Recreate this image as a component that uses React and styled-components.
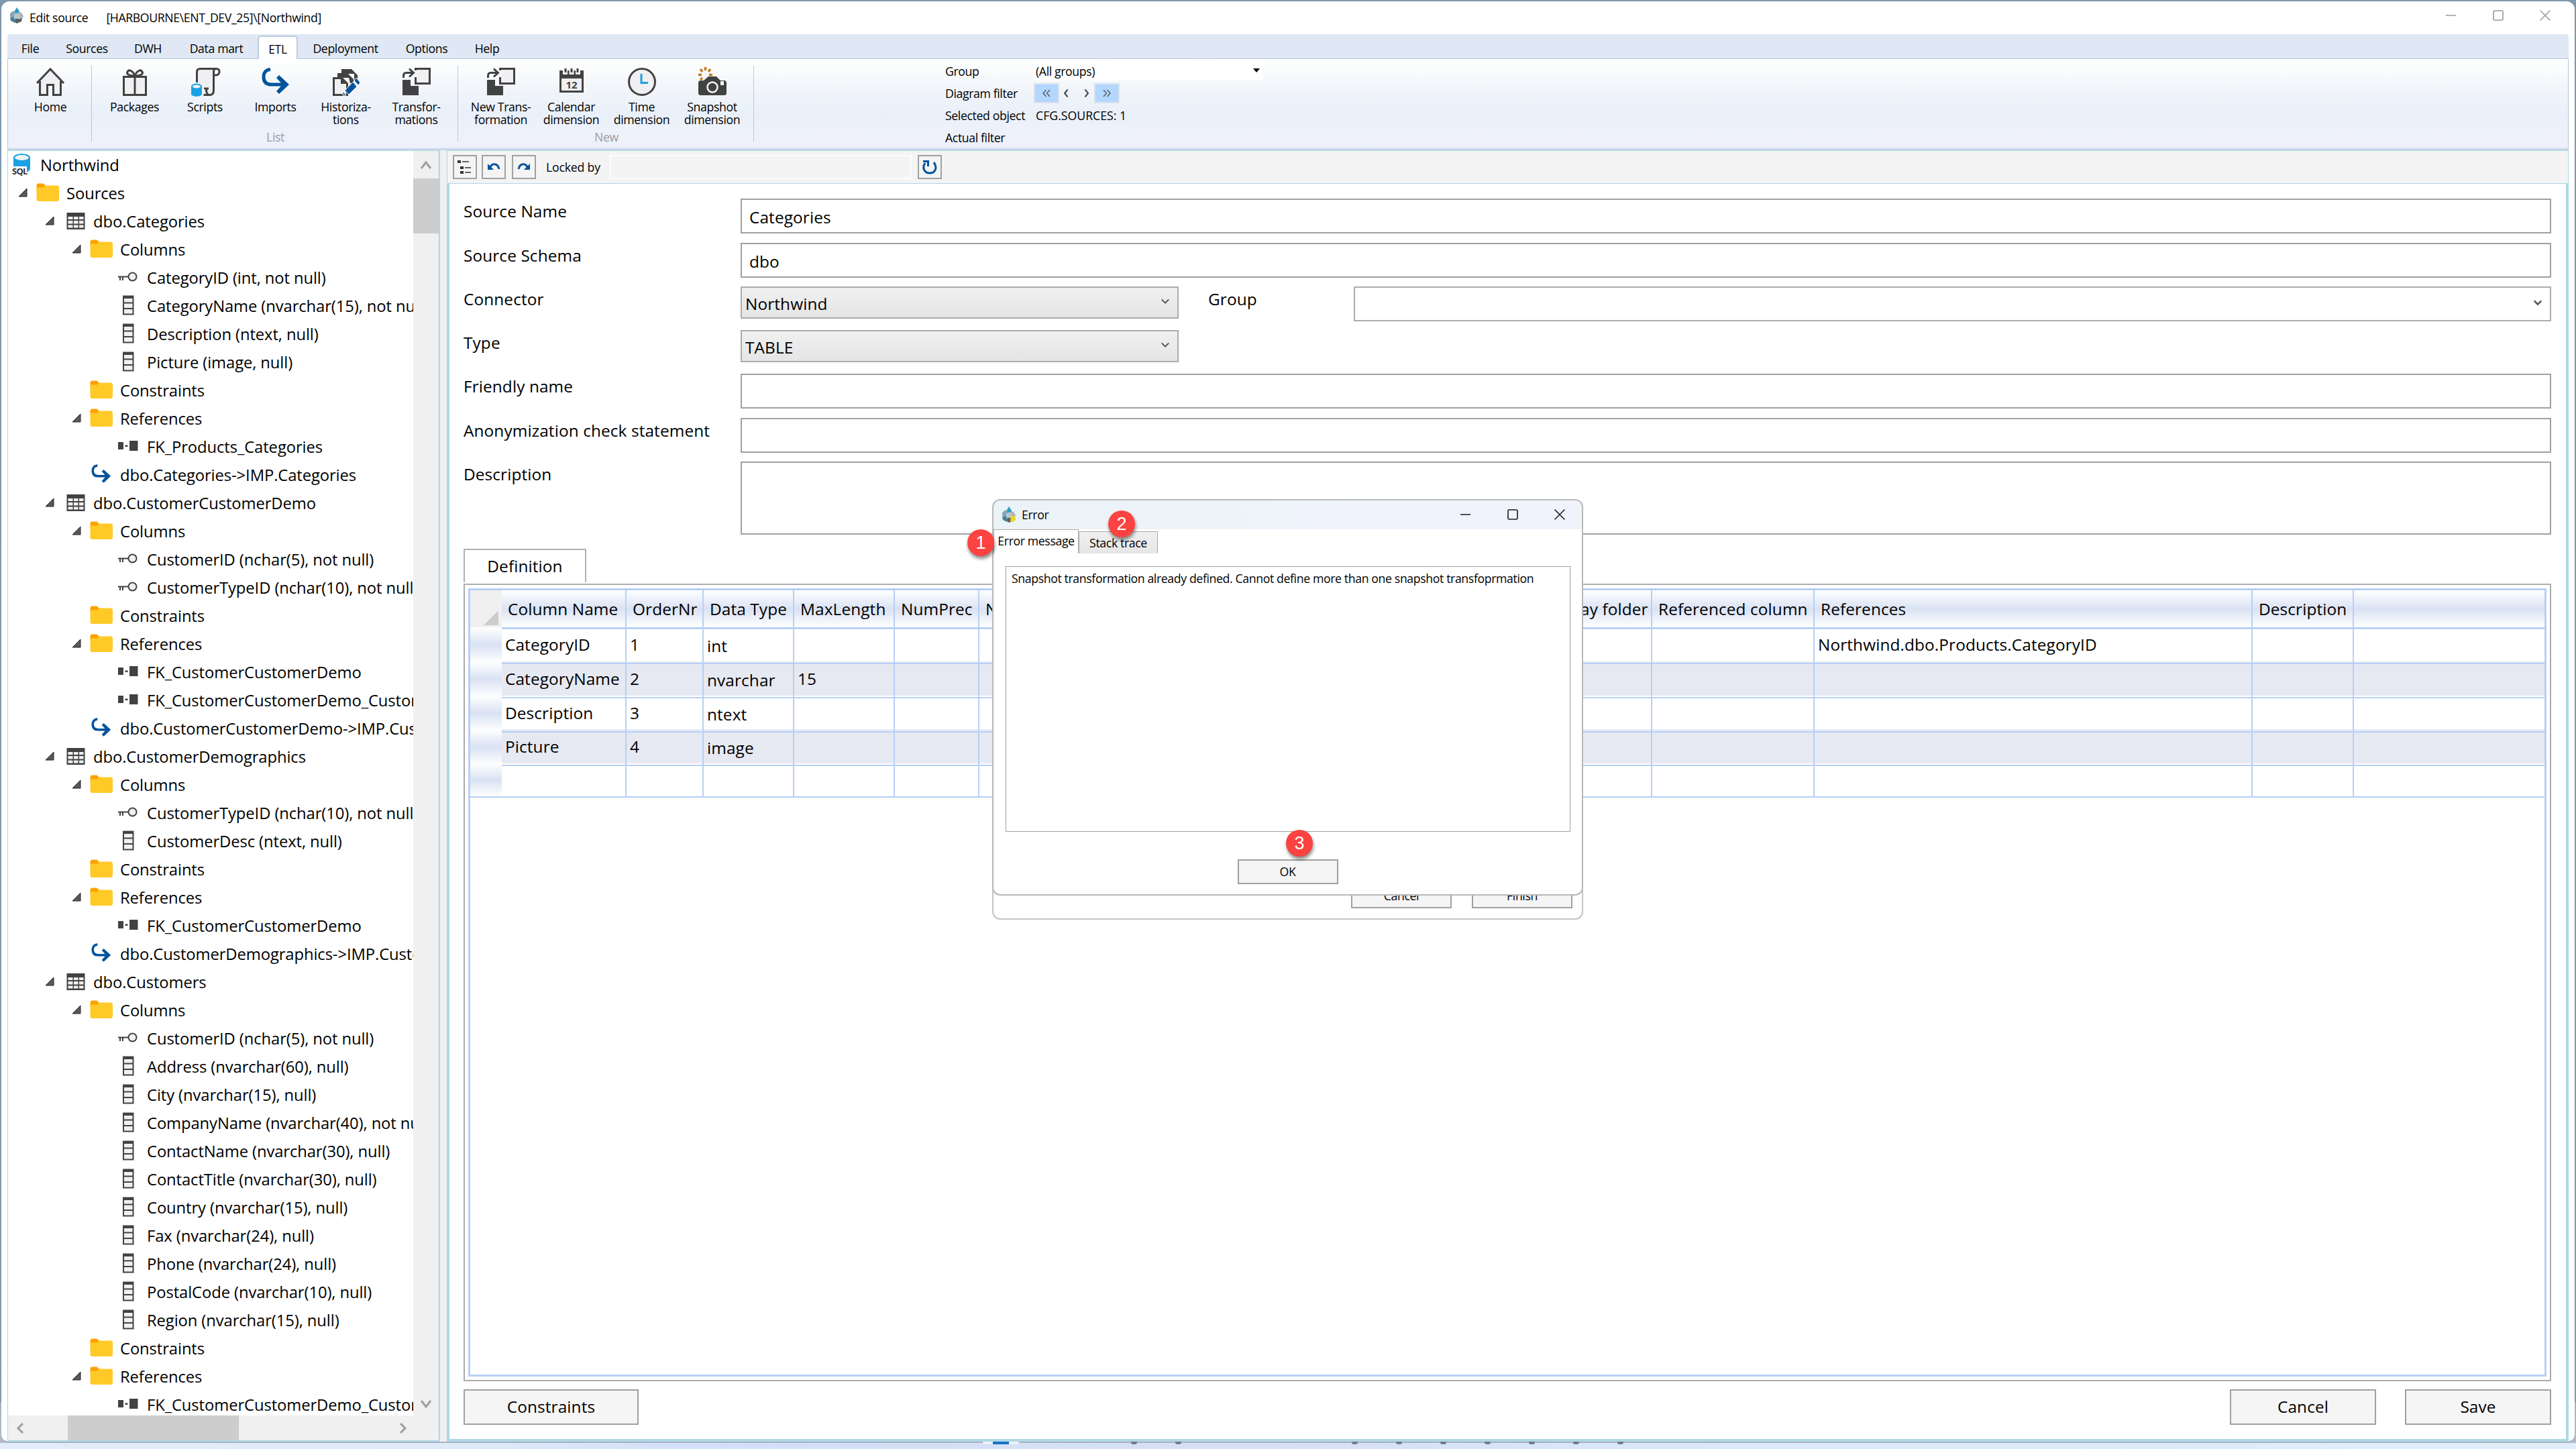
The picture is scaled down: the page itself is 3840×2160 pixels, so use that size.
import React from "react";
import styled, { createGlobalStyle } from "styled-components";

const menuItems = [
  { label: "File", width: 68 },
  { label: "Sources", width: 101 },
  { label: "DWH", width: 81 },
  { label: "Data mart", width: 123 },
  { label: "ETL", width: 60, active: true },
  { label: "Deployment", width: 142 },
  { label: "Options", width: 100 },
  { label: "Help", width: 80 },
];

const tree = [
  [0, "sql", "Northwind"],
  [1, "folder", "Sources", true],
  [2, "table", "dbo.Categories", true],
  [3, "folder", "Columns", true],
  [4, "key", "CategoryID (int, not null)"],
  [4, "column", "CategoryName (nvarchar(15), not null)"],
  [4, "column", "Description (ntext, null)"],
  [4, "column", "Picture (image, null)"],
  [3, "folder", "Constraints"],
  [3, "folder", "References", true],
  [4, "fk", "FK_Products_Categories"],
  [3, "import", "dbo.Categories->IMP.Categories"],
  [2, "table", "dbo.CustomerCustomerDemo", true],
  [3, "folder", "Columns", true],
  [4, "key", "CustomerID (nchar(5), not null)"],
  [4, "key", "CustomerTypeID (nchar(10), not null)"],
  [3, "folder", "Constraints"],
  [3, "folder", "References", true],
  [4, "fk", "FK_CustomerCustomerDemo"],
  [4, "fk", "FK_CustomerCustomerDemo_Customers"],
  [3, "import", "dbo.CustomerCustomerDemo->IMP.CustomerCustomerDemo"],
  [2, "table", "dbo.CustomerDemographics", true],
  [3, "folder", "Columns", true],
  [4, "key", "CustomerTypeID (nchar(10), not null)"],
  [4, "column", "CustomerDesc (ntext, null)"],
  [3, "folder", "Constraints"],
  [3, "folder", "References", true],
  [4, "fk", "FK_CustomerCustomerDemo"],
  [3, "import", "dbo.CustomerDemographics->IMP.CustomerDemographics"],
  [2, "table", "dbo.Customers", true],
  [3, "folder", "Columns", true],
  [4, "key", "CustomerID (nchar(5), not null)"],
  [4, "column", "Address (nvarchar(60), null)"],
  [4, "column", "City (nvarchar(15), null)"],
  [4, "column", "CompanyName (nvarchar(40), not null)"],
  [4, "column", "ContactName (nvarchar(30), null)"],
  [4, "column", "ContactTitle (nvarchar(30), null)"],
  [4, "column", "Country (nvarchar(15), null)"],
  [4, "column", "Fax (nvarchar(24), null)"],
  [4, "column", "Phone (nvarchar(24), null)"],
  [4, "column", "PostalCode (nvarchar(10), null)"],
  [4, "column", "Region (nvarchar(15), null)"],
  [3, "folder", "Constraints"],
  [3, "folder", "References", true],
  [4, "fk", "FK_CustomerCustomerDemo_Customers"],
];

const headers = [
  "Column Name",
  "OrderNr",
  "Data Type",
  "MaxLength",
  "NumPrec",
  "NumScale",
  "",
  "Display folder",
  "Referenced column",
  "References",
  "Description",
  "",
];

const rows = [
  ["CategoryID", "1", "int", "", "", "", "", "", "", "Northwind.dbo.Products.CategoryID", "", ""],
  ["CategoryName", "2", "nvarchar", "15", "", "", "", "", "", "", "", ""],
  ["Description", "3", "ntext", "", "", "", "", "", "", "", "", ""],
  ["Picture", "4", "image", "", "", "", "", "", "", "", "", ""],
  ["", "", "", "", "", "", "", "", "", "", "", ""],
];

/* ---------- icons ---------- */

const Logo = ({ warning }) => (
  <svg width="22" height="24" viewBox="0 0 22 24">
    <path d="M11 0l4 6v5l-4 2-3-2V5z" fill="#2f9cc0" />
    <path d="M1 9l5-4 3 2v5l-4 3-4-1z" fill="#7fa9b8" />
    <path d="M14 7l4 1 3 5-2 4-6-2z" fill="#a9b3b8" />
    <path d="M7 10l6-2 4 5-4 5-6-2z" fill="#b9c3c8" />
    <path d="M1 15l5-1 3 4-1 5-6-3z" fill="#4b8295" />
    <path d="M9 17l5 0 5-1-1 5-7 3-3-2z" fill="#596064" />
    {warning && <path d="M14 14h6l1 6-4 3-4-1z" fill="#ecd526" />}
  </svg>
);

const HomeIcon = () => (
  <svg width="48" height="48" viewBox="0 0 48 48">
    <path d="M8 24L24 6l16 18v20H29V27H19v17H8z" fill="#f0eff1" />
    <path
      d="M4 26L24 5l20 21M8.500 23v20.500H19.500V28.500h9V43.500h11V23"
      fill="none"
      stroke="#424242"
      strokeWidth="3"
    />
  </svg>
);

const PackageIcon = () => (
  <svg width="48" height="48" viewBox="0 0 48 48">
    <path
      d="M7.500 16.500h33v27h-33zM24 16v27M24 15c-3-8-9-10-11-6s3 6 11 6zM24 15c3-8 9-10 11-6s-3 6-11 6z"
      fill="#f0eff1"
      stroke="#424242"
      strokeWidth="3"
    />
  </svg>
);

const ScriptIcon = () => (
  <svg width="48" height="48" viewBox="0 0 48 48">
    <path d="M13 5h23v38H24l-3-10h-9z" fill="#f0eff1" />
    <path
      d="M11.500 25V9c0-3 2-4.500 5-4.500h24c3 0 4.500 2 4.500 4.500s-2 5-4.500 5h-4V8c0-2 1-3.500 4-3.500M36.500 13v24c0 4-2 6.500-6 6.500h-9M22 34h7M27 34c-3 3-1 6 1 9"
      fill="none"
      stroke="#424242"
      strokeWidth="3"
    />
    <path d="M3 31h16v11c0 5-16 5-16 0z" fill="#1ba1e2" />
    <ellipse cx="11" cy="31" rx="7" ry="3.500" fill="#eef3f7" stroke="#1ba1e2" strokeWidth="2" />
  </svg>
);

const ImportIcon = ({ size = 48 }) => (
  <svg width={size} height={size} viewBox="0 0 48 48">
    <path
      d="M16 5.500C9 6 5.500 11 6 18c.5 7 5 10 12 10h22"
      fill="none"
      stroke="#00539c"
      strokeWidth="5"
    />
    <path d="M29 14l15 14-15 14-4-4 9-10-9-10z" fill="#00539c" />
  </svg>
);

const HistoryIcon = () => (
  <svg width="48" height="48" viewBox="0 0 48 48">
    <path d="M17 5h15l9 9v7h-5V12H17z" fill="#424242" />
    <path d="M11 11h15l9 9v6h-5l-2-8H11z" fill="#424242" />
    <path d="M5.500 18.500h12l8 8v17h-20z" fill="#f0eff1" stroke="#424242" strokeWidth="3" />
    <path d="M16 17v10h10z" fill="#424242" />
    <path d="M39 18l6 7-3 4-6-7zM34 24l6 7-12 12-6-6zM19 38l5 6h-5z" fill="#00539c" stroke="#f6f6f6" />
  </svg>
);

const TransformIcon = () => (
  <svg width="48" height="48" viewBox="0 0 48 48">
    <path d="M3 21h12v9h12v14H3z" fill="#424242" />
    <path d="M22.500 4.500h21v22h-21z" fill="#f0eff1" stroke="#424242" strokeWidth="3" />
    <path d="M21 7v10h4V7z" fill="#f6f6f6" />
    <path d="M4.500 18v-3c0-3 1.500-4.500 4-4.500h9M13 4.500l6.500 6-6.500 6" fill="none" stroke="#424242" strokeWidth="3" />
  </svg>
);

const CalendarIcon = () => (
  <svg width="48" height="48" viewBox="0 0 48 48">
    <path d="M6 7h36v33H6z" fill="#424242" />
    <path d="M9 19h30v18H9z" fill="#f0eff1" />
    <path d="M11 4h7v9h-7zM20.500 4h7v9h-7zM30 4h7v9h-7z" fill="#f6f6f6" />
    <path d="M15 4v6M24 4v6M33 4v6" stroke="#424242" strokeWidth="3" />
    <CalendarText x="24" y="34">
      12
    </CalendarText>
  </svg>
);

const ClockIcon = () => (
  <svg width="48" height="48" viewBox="0 0 48 48">
    <circle cx="24" cy="24" r="19.500" fill="#f0eff1" stroke="#424242" strokeWidth="3" />
    <path d="M23 12v13.500h10" fill="none" stroke="#1ba1e2" strokeWidth="3" />
  </svg>
);

const CameraIcon = () => (
  <svg width="48" height="48" viewBox="0 0 48 48">
    <path d="M3 26c0-3 1-4 4-4h4l7-6h12l6 6h5c3 0 4 1 4 4v15c0 2-1 3-4 3H7c-3 0-4-1-4-3z" fill="#424242" />
    <circle cx="24" cy="32" r="7.500" fill="#424242" stroke="#f6f6f6" strokeWidth="2.500" />
    <path d="M36 23h5v6h-5z" fill="#f6f6f6" />
    <path d="M13.500 2v5M6 5l3 4M21 5l-3 4M3 13.500h5M19 13.500h5M6 21l3-3" stroke="#c27d1a" strokeWidth="3.500" />
  </svg>
);

const TreeIcon = ({ name }) => {
  switch (name) {
    case "sql":
      return (
        <svg width="36" height="36" viewBox="0 0 36 36">
          <path d="M6 7v17c0 9 25 9 25 0V7z" fill="#1ba1e2" />
          <ellipse cx="18.500" cy="8" rx="11.500" ry="5" fill="#f0f3f5" stroke="#1ba1e2" strokeWidth="2" />
          <path d="M3 21h23v14H3z" fill="#fff" />
          <SqlText x="4" y="33">
            SQL
          </SqlText>
        </svg>
      );
    case "folder":
      return (
        <svg width="36" height="36" viewBox="0 0 36 36">
          <path d="M1.500 8c0-2 1-3.500 3-3.500h7l3.500 3.500 3 6H1.500z" fill="#ffa000" />
          <path d="M1.500 10.500L12 10.500l3-3h17c2 0 3 1 3 3V28c0 2-1 3-3 3H4.500c-2 0-3-1-3-3z" fill="#ffca28" />
        </svg>
      );
    case "table":
      return (
        <svg width="36" height="36" viewBox="0 0 36 36">
          <path d="M6.500 6h27v25h-27z" fill="#424242" />
          <path
            d="M8.500 12h7v4h-7zM17 12h6.500v4H17zM25 12h6.500v4H25zM8.500 18h7v4.500h-7zM17 18h6.500v4.500H17zM25 18h6.500v4.500H25zM8.500 24.500h7v4h-7zM17 24.500h6.500v4H17zM25 24.500h6.500v4H25z"
            fill="#f0eff1"
          />
        </svg>
      );
    case "key":
      return (
        <svg width="36" height="36" viewBox="0 0 36 36">
          <circle cx="24.500" cy="17.500" r="6" fill="#f0eff1" stroke="#424242" strokeWidth="2" />
          <path d="M3 17.500h15M6 18v5M10 18v5" stroke="#424242" strokeWidth="2" />
        </svg>
      );
    case "column":
      return (
        <svg width="36" height="36" viewBox="0 0 36 36">
          <path d="M10 3.500h16.500V32.500H10z" fill="#424242" />
          <path d="M12 8h12.500v5.500H12zM12 15.500h12.500V22H12zM12 24h12.500v6.500H12z" fill="#f0eff1" />
        </svg>
      );
    case "fk":
      return (
        <svg width="36" height="36" viewBox="0 0 36 36">
          <path d="M3 12h8v11H3zM20 10h12.500v15H20zM13.500 16.500h4v2.500h-4z" fill="#424242" />
        </svg>
      );
    default:
      return <ImportIcon size={34} />;
  }
};

const Chevron = ({ d, size = 16, color = "#9f9f9f", width = 3 }) => (
  <svg width={size} height={size} viewBox="0 0 16 16">
    <path d={d} fill="none" stroke={color} strokeWidth={width} />
  </svg>
);

const WindowButtons = ({ color, gap }) => (
  <Controls $gap={gap}>
    <svg width="16" height="16" viewBox="0 0 16 16">
      <path d="M0 8h15" stroke={color} strokeWidth="1.500" />
    </svg>
    <svg width="16" height="16" viewBox="0 0 16 16">
      <rect x="1" y="1" width="14" height="14" rx="1.500" fill="none" stroke={color} strokeWidth="1.600" />
    </svg>
    <svg width="16" height="16" viewBox="0 0 16 16">
      <path d="M.5.5l15 15M15.500.5l-15 15" stroke={color} strokeWidth="1.500" />
    </svg>
  </Controls>
);

/* ---------- page ---------- */

const RibbonItem = ({ icon, children }) => (
  <RibbonButton>
    {icon}
    <span>{children}</span>
  </RibbonButton>
);

const Ribbon = () => (
  <RibbonBar>
    <RibbonGroup $width={125}>
      <RibbonItems>
        <RibbonItem icon={<HomeIcon />}>Home</RibbonItem>
      </RibbonItems>
    </RibbonGroup>
    <RibbonGroup $width={546}>
      <RibbonItems>
        <RibbonItem icon={<PackageIcon />}>Packages</RibbonItem>
        <RibbonItem icon={<ScriptIcon />}>Scripts</RibbonItem>
        <RibbonItem icon={<ImportIcon />}>Imports</RibbonItem>
        <RibbonItem icon={<HistoryIcon />}>
          Historiza-
          <br />
          tions
        </RibbonItem>
        <RibbonItem icon={<TransformIcon />}>
          Transfor-
          <br />
          mations
        </RibbonItem>
      </RibbonItems>
      <GroupCaption>List</GroupCaption>
    </RibbonGroup>
    <RibbonGroup $width={441}>
      <RibbonItems>
        <RibbonItem icon={<TransformIcon />}>
          New Trans-
          <br />
          formation
        </RibbonItem>
        <RibbonItem icon={<CalendarIcon />}>
          Calendar
          <br />
          dimension
        </RibbonItem>
        <RibbonItem icon={<ClockIcon />}>
          Time
          <br />
          dimension
        </RibbonItem>
        <RibbonItem icon={<CameraIcon />}>
          Snapshot
          <br />
          dimension
        </RibbonItem>
      </RibbonItems>
      <GroupCaption>New</GroupCaption>
    </RibbonGroup>
    <Filters>
      <span>Group</span>
      <GroupSelect>
        (All groups)
        <svg width="10" height="7" viewBox="0 0 10 7">
          <path d="M0 0h10L5 6z" fill="#000" />
        </svg>
      </GroupSelect>
      <span>Diagram filter</span>
      <Pager>
        <PagerButton $on>
          <Chevron d="M7.500 3L3 8l4.500 5M13 3L8.500 8l4.500 5" color="#555" width={1.3} />
        </PagerButton>
        <Chevron d="M10.500 2.500L6 8l4.500 5.500" color="#444" width={2} />
        <Chevron d="M5.500 2.500L10 8l-4.500 5.500" color="#444" width={2} />
        <PagerButton $on>
          <Chevron d="M3 3l4.500 5L3 13M8.500 3L13 8l-4.500 5" color="#555" width={1.3} />
        </PagerButton>
      </Pager>
      <span>Selected object</span>
      <FilterValue>CFG.SOURCES: 1</FilterValue>
      <span>Actual filter</span>
      <FilterValue />
    </Filters>
  </RibbonBar>
);

const SourceTree = () => (
  <TreePanel>
    <TreeList>
      {tree.map(([level, icon, text, open], i) => (
        <TreeRow key={i} $level={level}>
          <Expander>
            {open && (
              <svg width="14" height="14" viewBox="0 0 14 14">
                <path d="M13 1v12H1z" fill="#595959" stroke="#262626" />
              </svg>
            )}
          </Expander>
          <IconBox>
            <TreeIcon name={icon} />
          </IconBox>
          {text}
        </TreeRow>
      ))}
    </TreeList>
    <VerticalScroll>
      <Chevron d="M1 14l7-9 7 9" />
      <VerticalThumb />
      <Chevron d="M1 2l7 9 7-9" />
    </VerticalScroll>
    <HorizontalScroll>
      <Chevron d="M11 1L4 8l7 7" />
      <HorizontalThumb />
      <Chevron d="M5 1l7 7-7 7" />
    </HorizontalScroll>
    <ScrollCorner />
  </TreePanel>
);

const Toolbar = () => (
  <ToolbarBar>
    <ToolButton>
      <svg width="22" height="24" viewBox="0 0 22 24">
        <path d="M0 2h5v4H0zM4 11h5v4H4zM4 18h5v4H4z" fill="#333" />
        <path d="M7 4h10M11 13h9M11 20h9" stroke="#333" strokeWidth="1.500" />
      </svg>
    </ToolButton>
    <ToolButton $gap={7}>
      <svg width="20" height="20" viewBox="0 0 20 20">
        <path d="M4 12C7 3 16 4 18 13" fill="none" stroke="#00539c" strokeWidth="3" />
        <path d="M1 5l9 9H1z" fill="#00539c" />
      </svg>
    </ToolButton>
    <ToolButton $gap={9}>
      <svg width="20" height="20" viewBox="0 0 20 20">
        <path d="M16 12C13 3 4 4 2 13" fill="none" stroke="#00539c" strokeWidth="3" />
        <path d="M19 5l-9 9h9z" fill="#00539c" />
      </svg>
    </ToolButton>
    <LockedLabel>Locked by</LockedLabel>
    <LockedField />
    <ToolButton $gap={9}>
      <svg width="24" height="24" viewBox="0 0 24 24">
        <path d="M5 6C0 13 4 21 12 21s12-8 6-16" fill="none" stroke="#00539c" strokeWidth="3" />
        <path d="M2 2h9v9H8V5H2z" fill="#00539c" />
      </svg>
    </ToolButton>
  </ToolbarBar>
);

const Combo = ({ value, white }) => (
  <ComboBox $white={white}>
    {value}
    <Chevron d="M2 5l6 6 6-6" size={14} color="#555" width={white ? 3 : 2.4} />
  </ComboBox>
);

const SourceForm = () => (
  <Form>
    <Label>Source Name</Label>
    <Input>Categories</Input>
    <Label>Source Schema</Label>
    <Input>dbo</Input>
    <Label>Connector</Label>
    <SplitField>
      <Combo value="Northwind" />
      <Label>Group</Label>
      <Combo white />
    </SplitField>
    <Label>Type</Label>
    <SplitField>
      <Combo value="TABLE" />
    </SplitField>
    <Label>Friendly name</Label>
    <Input />
    <Label>Anonymization check statement</Label>
    <Input />
    <Label>Description</Label>
    <Input $tall />
  </Form>
);

const DefinitionGrid = () => (
  <GridBox>
    <GridHeader>
      <GridCorner>
        <svg width="22" height="22" viewBox="0 0 22 22">
          <path d="M22 0v22H0z" fill="#cdcdcd" />
        </svg>
      </GridCorner>
      {headers.map((text, i) => (
        <HeaderCell key={i}>{text}</HeaderCell>
      ))}
    </GridHeader>
    {rows.map((cells, i) => (
      <GridRow key={i} $alt={i % 2 === 1}>
        <RowHandle />
        {cells.map((text, j) => (
          <Cell key={j} $low={j === 2}>
            {text}
          </Cell>
        ))}
      </GridRow>
    ))}
  </GridBox>
);

const ErrorDialog = () => (
  <Dialog>
    <DialogTitle>
      <Logo warning />
      Error
      <WindowButtons color="#1a1a1a" gap={54} />
    </DialogTitle>
    <DialogTabs>
      <DialogTab $active>Error message</DialogTab>
      <DialogTab>Stack trace</DialogTab>
    </DialogTabs>
    <MessageBox>
      Snapshot transformation already defined. Cannot define more than one snapshot transfoprmation
    </MessageBox>
    <SmallButton>OK</SmallButton>
  </Dialog>
);

const App = () => {
  return (
    <Desktop>
      <GlobalStyle />
      <Window>
        <TitleBar>
          <Logo />
          <TitleText>Edit source</TitleText>
          <TitleText>[HARBOURNE\ENT_DEV_25]\[Northwind]</TitleText>
          <WindowButtons color="#999" gap={54} />
        </TitleBar>
        <MenuBar>
          {menuItems.map((item) => (
            <MenuItem key={item.label} $width={item.width} $active={item.active}>
              {item.label}
            </MenuItem>
          ))}
        </MenuBar>
        <Ribbon />
        <Main>
          <SourceTree />
          <Editor>
            <Toolbar />
            <EditorBody>
              <SourceForm />
              <TabHeader>Definition</TabHeader>
              <TabPanel>
                <DefinitionGrid />
              </TabPanel>
              <Footer>
                <Button $width={261}>Constraints</Button>
                <FooterRight>
                  <Button $width={218}>Cancel</Button>
                  <Button $width={218}>Save</Button>
                </FooterRight>
              </Footer>
            </EditorBody>
          </Editor>
        </Main>
      </Window>
      <Taskbar>
        <TaskActive />
        {[167, 57, 254, 57, 57, 57, 57, 57, 57].map((gap, i) => (
          <TaskDot key={i} $gap={gap} />
        ))}
      </Taskbar>
      <Wizard>
        <SmallButton>Cancel</SmallButton>
        <SmallButton>Finish</SmallButton>
      </Wizard>
      <ErrorDialog />
      <Badge $x={1442} $y={789}>1</Badge>
      <Badge $x={1652} $y={761}>2</Badge>
      <Badge $x={1917} $y={1237}>3</Badge>
    </Desktop>
  );
};

export default App;

const GlobalStyle = createGlobalStyle`
  * {
    box-sizing: border-box;
  }

  body {
    margin: 0;
    font-family: "Open Sans", "Noto Sans", sans-serif;
    font-size: 17.7px;
    letter-spacing: -0.38px;
    color: #000;
  }

  svg {
    display: block;
    flex-shrink: 0;
  }
`;

const CalendarText = styled.text`
  font-size: 15px;
  font-weight: 700;
  text-anchor: middle;
  letter-spacing: 0;
  fill: #424242;
`;

const SqlText = styled.text`
  font-size: 13px;
  font-weight: 700;
  letter-spacing: -0.06em;
  fill: #333;
`;

const Desktop = styled.div`
  position: relative;
  width: 3840px;
  height: 2160px;
  padding: 2px 2px 0;
  overflow: hidden;
  background: linear-gradient(#7f97ab 0, #8499ad 2090px, #a9b2c0 2091px, #b3bcc8 2151px);
`;

const Window = styled.div`
  display: flex;
  flex-direction: column;
  height: 2149px;
  padding: 0 9px;
  background: #fff;
  border-bottom: 2px solid #aab4c0;
  border-radius: 12px;
`;

const TitleBar = styled.header`
  display: flex;
  align-items: center;
  height: 49px;
  padding: 0 27px 7px 3px;
`;

const TitleText = styled.span`
  margin: 5px 19px 0 8px;
  white-space: pre;
`;

const Controls = styled.div`
  display: flex;
  gap: ${(props) => props.$gap}px;
  margin-left: auto;
`;

const MenuBar = styled.nav`
  display: flex;
  align-items: flex-end;
  height: 36px;
  background: #dfe8f4;
`;

const MenuItem = styled.div`
  display: flex;
  align-items: center;
  justify-content: center;
  width: ${(props) => props.$width}px;
  height: 34px;
  padding-top: 4px;
  border: ${(props) => (props.$active ? "2px solid #bccbe0" : "none")};
  border-bottom: none;
  border-radius: 5px 5px 0 0;
  background: ${(props) => (props.$active ? "#fff" : "none")};
  ${(props) => props.$active && "height: 35px; margin-bottom: -1px; padding-top: 2px; z-index: 1;"}
`;

const RibbonBar = styled.section`
  display: flex;
  height: 137px;
  border: 1px solid #b9c8de;
  border-bottom: 3px solid #c8d7e8;
  background: linear-gradient(#fefffe 0, #f1f5fa 35%, #e9f0f9 60%, #edf1fa 75%, #eef1fa 100%);
`;

const RibbonGroup = styled.div`
  display: flex;
  flex-direction: column;
  width: ${(props) => props.$width}px;
  height: 113px;
  margin-top: 10px;
  padding: 0 9px 0 11px;
  border-right: 1px solid #b9c9de;
`;

const RibbonItems = styled.div`
  display: flex;
  height: 96px;
`;

const RibbonButton = styled.div`
  display: flex;
  flex-direction: column;
  align-items: center;
  width: 105px;
  text-align: center;
  line-height: 19px;
  white-space: nowrap;

  span {
    margin-top: 4px;
  }
`;

const GroupCaption = styled.div`
  margin-top: 2px;
  text-align: center;
  line-height: 28px;
  color: #9a9da3;
`;

const Filters = styled.div`
  display: grid;
  grid-template-columns: 132px 341px;
  grid-template-rows: repeat(4, 33px);
  align-items: center;
  margin-left: 285px;
  margin-top: 1px;
`;

const GroupSelect = styled.div`
  display: flex;
  align-items: center;
  justify-content: space-between;
  height: 29px;
  padding: 0 4px 0 3px;
  background: #fff;
`;

const Pager = styled.div`
  display: flex;
  align-items: center;
  gap: 15px;
  svg:nth-of-type(1) {
    margin-left: -13px;
  }
  svg:nth-of-type(2) {
    margin-right: -12px;
  }
`;

const PagerButton = styled.div`
  display: flex;
  justify-content: center;
  align-items: center;
  width: 38px;
  height: 30px;
  border: 2px solid #dbe2ec;
  background: #b3d7fe;
  && svg {
    margin: 0;
  }
`;

const FilterValue = styled.div`
  padding-left: 3px;
  letter-spacing: 0;
`;

const Main = styled.main`
  display: flex;
  gap: 10px;
  flex: 1;
  min-height: 0;
  background: #f0f0f0;
`;

const TreePanel = styled.aside`
  display: grid;
  grid-template-columns: 1fr 38px;
  grid-template-rows: 1fr 37px;
  width: 645px;
  min-height: 0;
  border: 1px solid #add8e6;
  border-right-width: 2px;
  border-bottom-width: 2px;
  background: #fff;
`;

const TreeList = styled.div`
  min-width: 0;
  min-height: 0;
  overflow: hidden;
`;

const TreeRow = styled.div`
  display: flex;
  align-items: center;
  height: 42px;
  padding-left: ${(props) => props.$level * 40 - 33}px;
  margin-left: ${(props) => (props.$level === 0 ? -32 : 0)}px;
  font-size: 23.800px;
  letter-spacing: -0.1px;
  white-space: nowrap;
`;

const Expander = styled.div`
  display: flex;
  justify-content: center;
  flex-shrink: 0;
  width: 34px;
  margin-top: -3px;
  padding-right: 5px;
`;

const IconBox = styled.div`
  display: flex;
  justify-content: center;
  flex-shrink: 0;
  width: 36px;
  margin: -3px 10px 0 0;
`;

const VerticalScroll = styled.div`
  display: flex;
  flex-direction: column;
  align-items: center;
  padding: 12px 0 8px;
  background: #f0f0f0;

  svg:last-child {
    margin-top: auto;
  }
`;

const VerticalThumb = styled.div`
  width: 100%;
  height: 82px;
  margin-top: 13px;
  background: #cdcdcd;
`;

const HorizontalScroll = styled.div`
  display: flex;
  align-items: center;
  padding: 0 8px 0 11px;
  background: #f0f0f0;

  svg:last-child {
    margin-left: auto;
  }
`;

const HorizontalThumb = styled.div`
  width: 255px;
  height: 100%;
  margin-left: 62px;
  background: #cdcdcd;
`;

const ScrollCorner = styled.div`
  background: #f0f0f0;
`;

const Editor = styled.section`
  display: flex;
  flex-direction: column;
  flex: 1;
  min-width: 0;
`;

const ToolbarBar = styled.div`
  display: flex;
  align-items: center;
  height: 50px;
  padding-left: 8px;
  border: 1px solid #add8e6;
  background: #f4f4f4;
`;

const ToolButton = styled.div`
  display: flex;
  align-items: center;
  justify-content: center;
  width: 36px;
  height: 36px;
  margin-left: ${(props) => props.$gap || 0}px;
  border: 2px solid #a0a0a0;
`;

const LockedLabel = styled.span`
  width: 110px;
  padding-left: 15px;
  letter-spacing: -0.2px;
`;

const LockedField = styled.div`
  width: 450px;
  height: 36px;
  border: 2px solid #fdfdfd;
`;

const EditorBody = styled.div`
  display: flex;
  flex-direction: column;
  flex: 1;
  min-height: 0;
  padding: 22px 22px 21px 21px;
  border: 4px solid #add8e6;
  border-top: none;
  background: #fff;
  font-size: 24.400px;
  letter-spacing: 0.1px;
`;

const Form = styled.div`
  display: grid;
  grid-template-columns: 413px 1fr;
  grid-template-rows: 66px 65px 65px 65px 66px 65px 109px;
`;

const Label = styled.label`
  line-height: 38px;
`;

const Input = styled.div`
  height: ${(props) => (props.$tall ? 109 : 52)}px;
  padding: 4px 11px 0;
  border: 2px solid #a0a0a0;
  line-height: 44px;
`;

const SplitField = styled.div`
  display: grid;
  grid-template-columns: 653px 261px 1fr;

  ${Label} {
    padding-left: 44px;
  }
`;

const ComboBox = styled.div`
  display: flex;
  align-items: center;
  justify-content: space-between;
  height: ${(props) => (props.$white ? 52 : 48)}px;
  padding: 2px 11px 0 5px;
  border: 2px solid #acacac;
  background: ${(props) => (props.$white ? "#fff" : "linear-gradient(#f0f0f0, #e5e5e5)")};

  svg {
    margin: -6px 0 0 auto;
  }
`;

const TabHeader = styled.div`
  width: 183px;
  height: 50px;
  margin: 21px 0 2px;
  border: 2px solid #b0b0b0;
  border-bottom: none;
  text-align: center;
  line-height: 47px;
`;

const TabPanel = styled.div`
  flex: 1;
  min-height: 0;
  padding: 5px;
  border: 2px solid #acacac;
`;

const GridBox = styled.div`
  height: 100%;
  border: 3px solid #b8cff5;
`;

const GridHeader = styled.div`
  display: grid;
  grid-template-columns: 47px 186px 115px 135px 150px 126px 130px 700px 173px 242px 653px 151px 1fr;
  height: 55px;
`;

const GridRow = styled(GridHeader)`
  height: 50.800px;
  background: ${(props) => (props.$alt ? "#e6e9f2" : "#fff")};
`;

const GridCorner = styled.div`
  display: flex;
  align-items: flex-end;
  justify-content: flex-end;
  padding: 0 5px 6px 0;
  background: #f0f0f0;
`;

const HeaderCell = styled.div`
  padding-left: 9px;
  border-right: 2px solid #b8cff5;
  border-bottom: 3px solid #b8cff5;
  background: linear-gradient(#fff, #d9e2f3 50%, #fff);
  line-height: 55px;
  white-space: nowrap;

  &:last-child {
    border-right: none;
  }
`;

const RowHandle = styled.div`
  border-bottom: 2px solid #b8cff5;
  background: linear-gradient(#fff, #d9e2f3 50%, #fff);
`;

const Cell = styled.div`
  padding-left: 5px;
  padding-top: ${(props) => (props.$low ? 2 : 0)}px;
  border-right: 2px solid #b8cff5;
  border-bottom: 2px solid #b8cff5;
  line-height: 51px;
  white-space: nowrap;

  &:last-child {
    border-right: none;
  }
`;

const Footer = styled.footer`
  display: flex;
  justify-content: space-between;
  margin-top: 12px;
`;

const FooterRight = styled.div`
  display: flex;
  gap: 43px;
`;

const Button = styled.div`
  width: ${(props) => props.$width}px;
  height: 53px;
  border: 2px solid #a0a0a0;
  background: #f5f5f5;
  text-align: center;
  line-height: 47px;
`;

const Taskbar = styled.div`
  position: relative;
  display: flex;
  height: 11px;
  margin: -2px -2px 0;
  padding-left: 1465px;

  &::before {
    content: "";
    position: absolute;
    inset: 2px 0 0;
    background: linear-gradient(90deg, #e1edf8 0, #dfeaf8 700px, #d3e0f9 1000px, #d7dff5 1900px, #dbe9fa 2600px, #e0edf9 3840px);
  }
`;

const TaskActive = styled.div`
  position: relative;
  width: 54px;
  height: 4px;
  border-radius: 0 0 5px 5px;
  background: linear-gradient(90deg, #eef2f8 15px, #1274c8 15px, #1274c8 39px, #eef2f8 39px);
`;

const TaskDot = styled.div`
  position: relative;
  width: 9px;
  height: 4px;
  margin-left: ${(props) => props.$gap}px;
  border-radius: 0 0 3px 3px;
  background: #727c88;
`;

const Dialog = styled.div`
  position: absolute;
  left: 1479px;
  top: 744px;
  display: flex;
  flex-direction: column;
  width: 881px;
  height: 591px;
  overflow: hidden;
  border: 2px solid #b8b8b8;
  border-radius: 12px;
  background: #fff;
`;

const DialogTitle = styled.div`
  display: flex;
  align-items: center;
  gap: 8px;
  height: 43px;
  padding: 0 25px 1px 12px;
  background: linear-gradient(90deg, #ebf3f6, #f0f3fb 60%);
`;

const DialogTabs = styled.div`
  display: flex;
  align-items: flex-end;
  height: 36px;
`;

const DialogTab = styled.div`
  width: ${(props) => (props.$active ? 127 : 118)}px;
  height: ${(props) => (props.$active ? 36 : 33)}px;
  border: 1px solid #acacac;
  border-bottom: none;
  background: ${(props) => (props.$active ? "#fff" : "linear-gradient(#f0f0f0, #e6e6e6)")};
  text-align: center;
  line-height: 33px;
  white-space: nowrap;
`;

const MessageBox = styled.div`
  height: 396px;
  margin: 19px 17px 41px 18px;
  padding: 4px 8px;
  border: 1px solid #a0a0a0;
  line-height: 27px;
  white-space: nowrap;
`;

const SmallButton = styled.div`
  width: 150px;
  height: 37px;
  border: 2px solid #a0a0a0;
  background: #f5f5f5;
  text-align: center;
  line-height: 33px;

  ${Dialog} & {
    align-self: center;
  }
`;

const Wizard = styled.div`
  position: absolute;
  left: 1479px;
  top: 1200px;
  display: flex;
  align-items: flex-end;
  justify-content: flex-end;
  gap: 30px;
  width: 881px;
  height: 171px;
  padding: 0 14px 15px;
  border: 2px solid #c4c4c4;
  border-radius: 12px;
  background: #fff;
`;

const Badge = styled.div`
  position: absolute;
  left: ${(props) => props.$x}px;
  top: ${(props) => props.$y}px;
  width: 40px;
  height: 40px;
  border-radius: 50%;
  background: #fd4242;
  box-shadow: 1px 4px 5px rgba(0, 0, 0, 0.45);
  color: #fff;
  font-family: "Liberation Sans", Arial, sans-serif;
  font-size: 27px;
  letter-spacing: 0;
  line-height: 40px;
  text-align: center;
`;
